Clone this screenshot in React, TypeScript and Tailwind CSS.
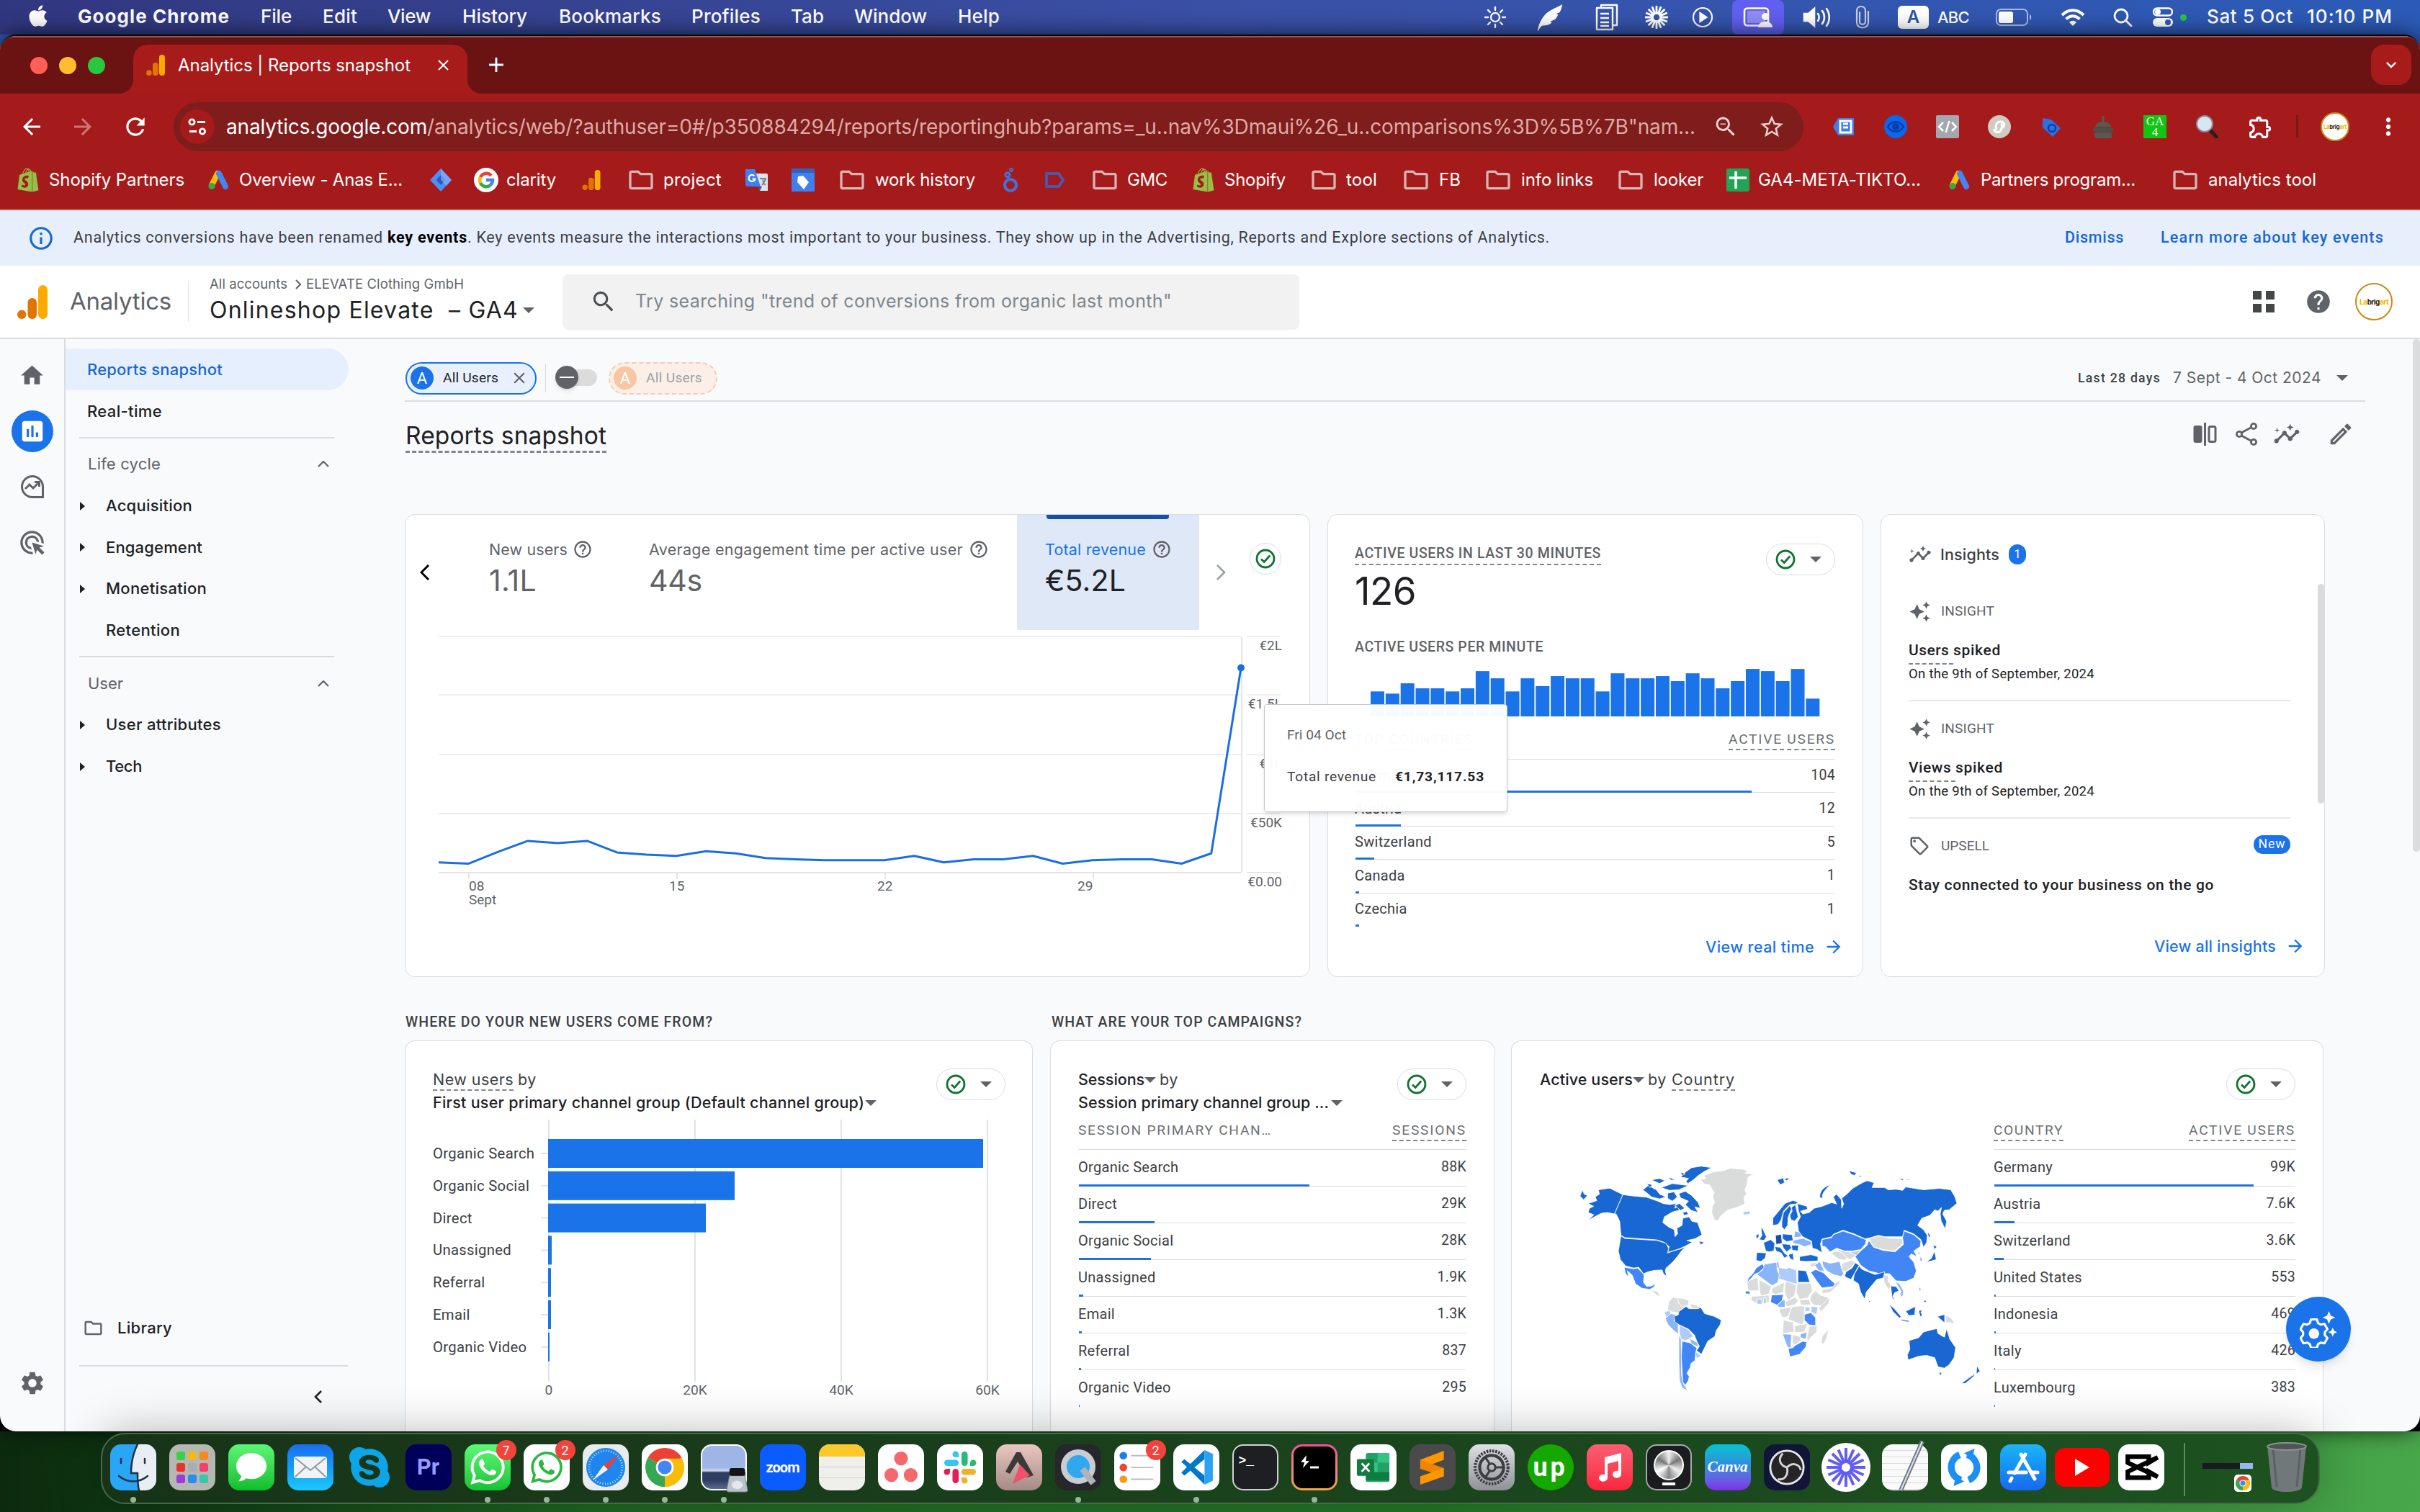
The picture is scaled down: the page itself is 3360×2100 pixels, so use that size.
import { useLayoutEffect, useRef, useState, type ReactNode } from "react";
import {
  MdHome, MdInsertChart, MdAdsClick, MdSettings, MdSearch, MdHelpOutline, MdHelp, MdArrowForward, MdArrowBack,
  MdRefresh, MdStarBorder, MdZoomOut, MdOutlineExtension, MdMoreVert, MdInfoOutline, MdClose, MdAdd,
  MdInsights, MdOutlineEdit, MdAutoAwesome, MdOutlineSell, MdExpandMore, MdOutlineFolder,
} from "react-icons/md";
import { FaApple, FaShopify, FaWhatsapp, FaSkype, FaYoutube, FaFeatherAlt } from "react-icons/fa";

/* Label whose tracking is adjusted so the text fills the width set by its class. */
function Fit({ className, children }: { className: string; children: string }) {
  const box = useRef<HTMLSpanElement>(null);
  const text = useRef<HTMLSpanElement>(null);
  const [spacing, setSpacing] = useState(0);
  useLayoutEffect(() => {
    if (box.current && text.current) {
      const room = box.current.clientWidth;
      const natural = text.current.getBoundingClientRect().width;
      setSpacing((room - natural) / children.length);
    }
  }, [children]);
  return (
    <span ref={box} className={`inline-block shrink-0 whitespace-pre ${className}`}>
      <span ref={text} style={{ letterSpacing: `${spacing}px` }}>{children}</span>
    </span>
  );
}

/* Geometric face used for product headings and navigation. */
const display = "font-['Inter',sans-serif]";

const Tri = ({ className = "" }: { className?: string }) => (
  <svg viewBox="0 0 16 8" className={`h-[8px] w-[16px] shrink-0 fill-[#5f6368] ${className}`}><path d="M0 0h16L8 8z" /></svg>
);

const GaLogo = ({ className }: { className: string }) => (
  <svg viewBox="0 0 42 47" className={`shrink-0 ${className}`}>
    <rect x="29" y="0" width="13" height="47" rx="6.5" fill="#f9ab00" />
    <rect x="14.5" y="18" width="12.5" height="29" rx="6" fill="#e37400" />
    <circle cx="6.2" cy="40.8" r="6.2" fill="#e37400" />
  </svg>
);

const AdsLogo = ({ className }: { className: string }) => (
  <svg viewBox="0 0 30 28" className={`h-[28px] w-[30px] shrink-0 ${className}`}>
    <path d="M13 5 5 21" stroke="#fbbc04" strokeWidth="8" strokeLinecap="round" />
    <path d="M15 5l9 18" stroke="#4285f4" strokeWidth="8" strokeLinecap="round" />
    <circle cx="5" cy="22.5" r="4.6" fill="#34a853" />
  </svg>
);

/* ---------- macOS menu bar ---------- */

function MenuBar() {
  return (
    <div className="flex h-12 shrink-0 items-center bg-linear-to-r from-[#31377f] via-[#3a50a5] to-[#2b5bb8] pb-[4px] font-['Inter',sans-serif] text-[26px] font-medium text-white">
      <FaApple className="ml-[36px] h-[34px] w-[34px]" />
      <Fit className="ml-[38px] w-[211px] font-bold">Google Chrome</Fit>
      <Fit className="ml-[43px] w-[43px]">File</Fit>
      <Fit className="ml-[43px] w-[48px]">Edit</Fit>
      <Fit className="ml-[42px] w-[60px]">View</Fit>
      <Fit className="ml-[44px] w-[90px]">History</Fit>
      <Fit className="ml-[44px] w-[142px]">Bookmarks</Fit>
      <Fit className="ml-[42px] w-[96px]">Profiles</Fit>
      <Fit className="ml-[42px] w-[46px]">Tab</Fit>
      <Fit className="ml-[42px] w-[101px]">Window</Fit>
      <Fit className="ml-[43px] w-[58px]">Help</Fit>
      <div className="ml-[672px] flex h-12 items-center pt-[4px]">
        <svg viewBox="0 0 32 32" className="h-[32px] w-[32px] stroke-white" fill="none" strokeWidth="2.4" strokeLinecap="round">
          <circle cx="16" cy="16" r="6" />
          <path d="M16 2v4M16 26v4M2 16h4M26 16h4M6 6l3 3M23 23l3 3M26 6l-3 3M6 26l3-3" />
        </svg>
        <svg viewBox="0 0 40 40" className="ml-[40px] h-[38px] w-[40px] fill-white"><path d="M2 39c2-12 8-20 13-25C22 8 30 6 38 1c-1 6-2 9-4 12l-5 2 3 1c-2 4-3 6-6 8l-6 2 3 1c-3 4-8 5-14 5-3 2-5 5-6 8z" /></svg>
        <svg viewBox="0 0 32 38" className="ml-[43px] h-[38px] w-[32px] stroke-white" fill="none" strokeWidth="2.4" strokeLinejoin="round">
          <path d="M8 6V2h22v28h-5M2 6h22v30H2zM7 14h12M7 20h12M7 26h12M7 31h12" />
        </svg>
        <svg viewBox="0 0 36 36" className="ml-[36px] h-[34px] w-[34px] stroke-white" fill="none" strokeWidth="3">
          <circle cx="18" cy="18" r="6" />
          <path d="M18 1v12M18 23v12M1 18h12M23 18h12M6 6l8 8M22 22l8 8M30 6l-8 8M6 30l8-8M11.500 2.300l4 10M20.500 23.700l4 10M24.500 2.300l-4 10M15.500 23.700l-4 10M2.300 11.500l10 4M33.700 24.500l-10-4M33.700 11.500l-10 4M2.300 24.500l10-4" />
        </svg>
        <svg viewBox="0 0 30 30" className="ml-[32px] h-[30px] w-[30px] fill-none stroke-white" strokeWidth="2.2">
          <circle cx="15" cy="15" r="13" /><path d="M11.500 9v12l9-6z" className="fill-white" />
        </svg>
        <div className="ml-[26px] flex h-12 w-[72px] items-center justify-center rounded-lg bg-[#615ff0]">
          <svg viewBox="0 0 42 28" className="h-[28px] w-[42px]">
            <rect x="2" y="1.500" width="33" height="24" rx="4" fill="none" stroke="#fff" strokeWidth="2.600" />
            <rect x="6" y="5" width="25" height="17" fill="#8f8df6" />
            <circle cx="31" cy="13" r="5" fill="#fff" /><path d="M21 28c0-11 20-11 20 0z" fill="#fff" />
          </svg>
        </div>
        <svg viewBox="0 0 40 32" className="ml-[26px] h-[32px] w-[40px] fill-none stroke-white" strokeWidth="2.600" strokeLinecap="round">
          <path d="M2 11h6l8-7v24l-8-7H2z" className="fill-white" /><path d="M21 11c2 3 2 7 0 10M27 7c4 5 4 13 0 18M33 4c5 7 5 17 0 24" />
        </svg>
        <svg viewBox="0 0 20 34" className="ml-[33px] h-[34px] w-[20px] fill-none stroke-[#c9d2ee]" strokeWidth="2.200" strokeLinecap="round">
          <path d="M18 9v15c0 10-16 10-16 0V8c0-8 12-8 12 0v15c0 5-8 5-8 0V10" />
        </svg>
        <div className="ml-[39px] flex h-[32px] w-[43px] items-center justify-center rounded-[6px] bg-white text-[24px] font-semibold text-[#2f55b0]">A</div>
        <Fit className="ml-[12px] w-[44px] text-[22px]">ABC</Fit>
        <svg viewBox="0 0 51 24" className="ml-[37px] h-[24px] w-[51px]">
          <rect x="1" y="1" width="43" height="22" rx="6" fill="none" stroke="#a9bbe6" strokeWidth="2" />
          <rect x="4" y="4" width="20" height="16" rx="3" fill="#fff" /><path d="M47 8c3 1 3 7 0 8z" fill="#a9bbe6" />
        </svg>
        <svg viewBox="0 0 34 26" className="ml-[39px] h-[26px] w-[34px] fill-none stroke-white" strokeWidth="4.200">
          <path d="M2 10c9-9 21-9 30 0M7.500 15.500c6-5.500 13-5.500 19 0" /><path d="M12 20c3-3 7-3 10 0l-5 5z" className="fill-white stroke-none" />
        </svg>
        <svg viewBox="0 0 27 26" className="ml-[39px] h-[26px] w-[27px] fill-none stroke-white" strokeWidth="2.800" strokeLinecap="round">
          <circle cx="11" cy="11" r="9" /><path d="M18 18l7 7" />
        </svg>
        <svg viewBox="0 0 30 28" className="ml-[27px] h-[28px] w-[30px]">
          <rect x="2" y="1.500" width="26" height="10" rx="5" fill="none" stroke="#fff" strokeWidth="2.400" /><circle cx="8" cy="6.500" r="4" fill="#fff" />
          <rect x="1" y="15" width="28" height="12" rx="6" fill="#fff" /><circle cx="22" cy="21" r="4" fill="#2f5ab8" />
        </svg>
        <div className="ml-[9px] size-[9px] rounded-full bg-[#28c840]" />
      </div>
      <Fit className="ml-[28px] w-[120px]">Sat 5 Oct</Fit>
      <Fit className="ml-[19px] w-[119px]">10:10 PM</Fit>
    </div>
  );
}

/* ---------- Browser chrome ---------- */

function TabStrip() {
  return (
    <div className="flex h-[80px] shrink-0 items-end border-t-2 border-[#8e5a58] bg-[#6b1212] font-['Inter',sans-serif]">
      <div className="ml-[42px] flex h-[78px] items-center gap-[16px]">
        <div className="size-[24px] rounded-full bg-[#ff5f57]" />
        <div className="size-[24px] rounded-full bg-[#febc2e]" />
        <div className="size-[24px] rounded-full bg-[#28c840]" />
      </div>
      <svg viewBox="0 0 20 20" className="ml-[19px] h-[20px] w-[20px] fill-[#a81b1b]"><path d="M20 0v20H0C12 20 20 12 20 0z" /></svg>
      <div className="flex h-[68px] w-[464px] items-center rounded-t-[20px] bg-[#a81b1b] pb-[11px] text-[24px] text-white">
        <GaLogo className="ml-[17px] h-[29px] w-[28px]" />
        <Fit className="ml-[17px] w-[323px]">Analytics | Reports snapshot</Fit>
        <MdClose className="ml-[33px] size-[25px]" />
      </div>
      <svg viewBox="0 0 20 20" className="h-[20px] w-[20px] fill-[#a81b1b]"><path d="M0 0v20h20C8 20 0 12 0 0z" /></svg>
      <div className="flex h-[80px] items-center"><MdAdd className="ml-[3px] size-[34px] text-white" /></div>
      <div className="mb-[12px] ml-auto mr-[12px] flex h-[56px] w-[56px] items-center justify-center rounded-[18px] bg-[#a81b1b] text-white">
        <MdExpandMore className="size-[28px]" />
      </div>
    </div>
  );
}

const Avatar = ({ className }: { className: string }) => (
  <div className={`flex shrink-0 items-center justify-center rounded-full border-2 border-[#c98a17] bg-white font-bold leading-none tracking-tighter text-[#f2b705] ${className}`}>
    La<span className="text-[#3b2b10]">brig</span>art
  </div>
);

function Toolbar() {
  return (
    <div className="flex h-[92px] shrink-0 items-center bg-[#a51b1b] font-['Inter',sans-serif] text-white">
      <MdArrowBack className="ml-[26px] size-[36px]" />
      <MdArrowForward className="ml-[35px] size-[36px] text-[#cf7676]" />
      <MdRefresh className="ml-[36px] size-[38px]" />
      <div className="ml-[34px] flex h-[68px] w-[2263px] items-center rounded-full bg-[#7f1c1c]">
        <div className="ml-[9px] flex size-[48px] items-center justify-center rounded-full bg-[#a51b1b]">
          <svg viewBox="0 0 26 24" className="h-[24px] w-[26px] fill-none stroke-white" strokeWidth="2.800">
            <circle cx="5.500" cy="5.500" r="3.600" /><path d="M13 5.500h11M2 18.500h10" /><circle cx="20" cy="18.500" r="3.600" />
          </svg>
        </div>
        <Fit className="ml-[16px] w-[279px] text-[28px]">analytics.google.com</Fit>
        <Fit className="w-[1761px] text-[28px] text-[#dfaaa5]">{"/analytics/web/?authuser=0#/p350884294/reports/reportinghub?params=_u..nav%3Dmaui%26_u..comparisons%3D%5B%7B\"nam..."}</Fit>
        <MdZoomOut className="ml-[24px] size-[36px] text-[#ecd0cd]" />
        <MdStarBorder className="ml-[27px] size-[38px] text-[#ecd0cd]" />
      </div>
      <div className="ml-[40px] flex items-center gap-[40px]">
        <svg viewBox="0 0 32 32" className="size-[32px]"><path d="M8 4h22v24H8L1 16z" fill="#3f7de8" /><rect x="11" y="8" width="15" height="16" fill="none" stroke="#fff" strokeWidth="3" /><path d="M15 12h7M15 17h7" stroke="#fff" strokeWidth="3" /></svg>
        <svg viewBox="0 0 32 32" className="size-[32px]"><circle cx="16" cy="16" r="16" fill="#0b66f0" /><path d="M5 16c6-9 16-9 22 0-6 9-16 9-22 0z" fill="none" stroke="#0a3ea8" strokeWidth="2.500" /><circle cx="16" cy="16" r="5" fill="#0a3ea8" /></svg>
        <svg viewBox="0 0 32 32" className="size-[32px]"><rect width="32" height="32" rx="2" fill="#a3a7ae" /><path d="M10 10l-6 6 6 6M22 10l6 6-6 6M18.500 8l-5 16" fill="none" stroke="#fff" strokeWidth="2.500" /></svg>
        <svg viewBox="0 0 32 32" className="size-[32px]"><circle cx="16" cy="16" r="16" fill="#cfcbc2" /><path d="M13 20c-3-1-3-10 4-11s8 8 1 9M18 12c3 1 1 9-2 11s-8 0-7-4" fill="none" stroke="#fff" strokeWidth="3" /></svg>
        <svg viewBox="0 0 32 32" className="size-[32px]"><path d="M4 4l12 2 13 12-11 12L4 17z" fill="#2f6fe0" /><circle cx="17" cy="18" r="5" fill="none" stroke="#0d3fa5" strokeWidth="2.500" /></svg>
        <svg viewBox="0 0 32 32" className="size-[32px]"><path d="M16 1v10" stroke="#555a52" strokeWidth="3" /><path d="M5 16c0-9 22-9 22 0z" fill="#555a52" /><rect x="2" y="17" width="28" height="6" rx="2" fill="#4b5049" /><rect x="4" y="24" width="24" height="8" rx="2" fill="#555a52" /></svg>
        <div className="flex size-[32px] flex-col items-center justify-center bg-[#12c512] font-['Liberation_Serif',serif] text-[17px] leading-[15px]"><span>GA</span><span>4</span></div>
        <svg viewBox="0 0 32 32" className="size-[32px]"><path d="M19 19l11 12" stroke="#222" strokeWidth="5" strokeLinecap="round" /><circle cx="13" cy="12" r="11" fill="#d7e6f3" stroke="#8a8f96" strokeWidth="2" /></svg>
        <MdOutlineExtension className="size-[37px]" />
      </div>
      <div className="ml-[31px] h-[32px] w-[3px] bg-[#7d1818]" />
      <Avatar className="ml-[31px] size-[40px] text-[8px]" />
      <MdMoreVert className="ml-[35px] size-[38px]" />
    </div>
  );
}

const Folder = ({ className }: { className: string }) => <MdOutlineFolder className={`size-[40px] shrink-0 text-[#d8b4b2] ${className}`} />;

function Bookmarks() {
  return (
    <div className="flex h-[70px] shrink-0 items-center border-b-2 border-[#c04d4d] bg-[#a51b1b] pb-[12px] font-['Inter',sans-serif] text-[24px] text-white">
      <FaShopify className="ml-[22px] size-[34px] shrink-0 text-[#95bf47]" />
      <Fit className="ml-[12px] w-[188px]">Shopify Partners</Fit>
      <AdsLogo className="ml-[33px]" />
      <Fit className="ml-[13px] w-[227px]">Overview - Anas E...</Fit>
      <svg viewBox="0 0 32 32" className="ml-[37px] size-[32px] shrink-0"><path d="M16 0l15 16-15 16L1 16z" fill="#4f8df7" /><path d="M16 9l6 7-6 7-6-7z" fill="#2859b8" /><path d="M16 0l15 16-7 8-8-8z" fill="#8fb6fb" opacity=".6" /></svg>
      <div className="ml-[30px] flex size-[34px] shrink-0 items-center justify-center rounded-full bg-white">
        <svg viewBox="0 0 24 24" className="size-[24px] fill-none" strokeWidth="4.500">
          <path d="M19 6A9 9 0 0 0 4 8" stroke="#ea4335" /><path d="M4 8a9 9 0 0 0 0 8" stroke="#fbbc04" />
          <path d="M4 16a9 9 0 0 0 14 3" stroke="#34a853" /><path d="M18 19a9 9 0 0 0 3-7h-9" stroke="#4285f4" />
        </svg>
      </div>
      <Fit className="ml-[11px] w-[69px]">clarity</Fit>
      <GaLogo className="ml-[35px] h-[28px] w-[28px]" />
      <Folder className="ml-[35px]" />
      <Fit className="ml-[11px] w-[81px]">project</Fit>
      <svg viewBox="0 0 32 32" className="ml-[33px] size-[32px] shrink-0"><path d="M14 7h15a2 2 0 0 1 2 2v22H20z" fill="#dfe3e8" /><path d="M0 1h13l8 24H2l-2-2z" fill="#3f80ee" /><path d="M20 31l-3-6h6z" fill="#2859b8" /><path d="M12.500 10.500a4.500 4.500 0 1 0 1 4h-4" fill="none" stroke="#fff" strokeWidth="2.200" /><path d="M20 14h9M24 14c0 5 2 8 4 9M28 14c-1 5-3 7-5 9" stroke="#7a828d" strokeWidth="1.800" fill="none" /></svg>
      <svg viewBox="0 0 32 32" className="ml-[32px] size-[32px] shrink-0"><rect width="32" height="32" fill="#3f80ee" /><rect width="32" height="6" fill="#2f63c0" /><path d="M9 11l7-1 8 9-7 10-9-10z" fill="#fff" /></svg>
      <Folder className="ml-[32px]" />
      <Fit className="ml-[12px] w-[139px]">work history</Fit>
      <svg viewBox="0 0 26 34" className="ml-[36px] h-[34px] w-[26px] shrink-0 fill-none stroke-[#3f74e0]"><circle cx="13" cy="24" r="8" strokeWidth="4" /><circle cx="9" cy="10" r="3" strokeWidth="3" /><circle cx="14" cy="3" r="2" strokeWidth="2" /></svg>
      <svg viewBox="0 0 28 22" className="ml-[35px] h-[22px] w-[28px] shrink-0 fill-none stroke-[#3f5fc0]" strokeWidth="3.500"><path d="M2 2h17l6 9-6 9H2z" /></svg>
      <Folder className="ml-[35px]" />
      <Fit className="ml-[11px] w-[56px]">GMC</Fit>
      <FaShopify className="ml-[33px] size-[34px] shrink-0 text-[#95bf47]" />
      <Fit className="ml-[12px] w-[85px]">Shopify</Fit>
      <Folder className="ml-[33px]" />
      <Fit className="ml-[11px] w-[43px]">tool</Fit>
      <Folder className="ml-[34px]" />
      <Fit className="ml-[12px] w-[30px]">FB</Fit>
      <Folder className="ml-[32px]" />
      <Fit className="ml-[12px] w-[100px]">info links</Fit>
      <Folder className="ml-[32px]" />
      <Fit className="ml-[12px] w-[69px]">looker</Fit>
      <svg viewBox="0 0 32 32" className="ml-[32px] size-[32px] shrink-0"><rect width="32" height="32" rx="3" fill="#23a455" /><path d="M13 4v24M4 13h24" stroke="#fff" strokeWidth="3.500" /></svg>
      <Fit className="ml-[12px] w-[226px]">GA4-META-TIKTO...</Fit>
      <AdsLogo className="ml-[39px]" />
      <Fit className="ml-[14px] w-[215px]">Partners program...</Fit>
      <Folder className="ml-[49px]" />
      <Fit className="ml-[12px] w-[150px]">analytics tool</Fit>
    </div>
  );
}

/* ---------- Analytics page ---------- */

function Banner() {
  return (
    <div className="flex h-[77px] shrink-0 items-center bg-[#e7effd] text-[21.500px] text-[#3c4043]">
      <MdInfoOutline className="ml-[38px] size-[38px] text-[#1967d2]" />
      <Fit className="ml-[26px] w-[436px]">Analytics conversions have been renamed </Fit>
      <Fit className="w-[111px] font-bold text-black">key events</Fit>
      <Fit className="w-[1503px]">. Key events measure the interactions most important to your business. They show up in the Advertising, Reports and Explore sections of Analytics.</Fit>
      <Fit className="ml-[715px] w-[82px] font-medium text-[#1967d2]">Dismiss</Fit>
      <Fit className="ml-[51px] w-[310px] font-medium text-[#1967d2]">Learn more about key events</Fit>
    </div>
  );
}

function Header() {
  return (
    <div className="flex h-[102px] shrink-0 items-center border-b-2 border-[#dadce0] bg-white">
      <GaLogo className="ml-[24px] h-[47px] w-[42px]" />
      <Fit className={`${display} ml-[31px] w-[141px] text-[33px] text-[#5f6368]`}>Analytics</Fit>
      <div className="ml-[23px] h-[56px] w-px bg-[#e0e2e5]" />
      <div className={`${display} ml-[29px] w-[451px] pb-[4px]`}>
        <div className="flex h-[28px] items-center text-[18.500px] text-[#5f6368]">
          <Fit className="w-[108px]">All accounts</Fit>
          <svg viewBox="0 0 8 14" className="ml-[11px] h-[14px] w-[8px] fill-none stroke-[#5f6368]" strokeWidth="2"><path d="M1 1l6 6-6 6" /></svg>
          <Fit className="ml-[7px] w-[219px]">ELEVATE Clothing GmbH</Fit>
        </div>
        <div className="flex h-[44px] items-center">
          <Fit className="w-[429px] text-[32px] text-[#202124]">{"Onlineshop Elevate  – GA4"}</Fit>
          <Tri className="ml-[6px]" />
        </div>
      </div>
      <div className="ml-[39px] flex h-[77px] w-[1023px] items-center rounded-[8px] bg-[#f2f2f2]">
        <MdSearch className="ml-[38px] size-[38px] text-[#4b4f54]" />
        <Fit className={`${display} ml-[25px] w-[745px] text-[25px] text-[#80868b]`}>{'Try searching "trend of conversions from organic last month"'}</Fit>
      </div>
      <div className="ml-auto mr-[38px] flex items-center">
        <svg viewBox="0 0 30 30" className="size-[30px] fill-[#444746]"><path d="M0 0h12v12H0zM18 0h12v12H18zM0 18h12v12H0zM18 18h12v12H18z" /></svg>
        <MdHelp className="ml-[42px] size-[38px] text-[#5f6368]" />
        <Avatar className="ml-[32px] size-[52px] text-[11px]" />
      </div>
    </div>
  );
}

function Rail() {
  const cell = "flex h-[77.300px] items-center justify-center text-[#5f6368]";
  return (
    <div className="flex w-[91px] shrink-0 flex-col border-r-2 border-[#dadce0] pt-[12px]">
      <div className={cell}><MdHome className="size-[37px]" /></div>
      <div className={cell}><div className="flex size-[58px] items-center justify-center rounded-full bg-[#1a73e8]"><MdInsertChart className="size-[38px] text-white" /></div></div>
      <div className={cell}>
        <svg viewBox="0 0 32 32" className="size-[32px] fill-none stroke-[#5f6368]" strokeWidth="3"><path d="M30.500 30.500V16A14.500 14.500 0 1 0 16 30.500z" /><path d="M6 19l6-6 5 5 8-8M19 9.500h6.500V16" /></svg>
      </div>
      <div className={cell}><MdAdsClick className="size-[39px]" /></div>
      <div className={`${cell} mb-[28px] mt-auto`}><MdSettings className="size-[38px]" /></div>
    </div>
  );
}

function NavGroup({ title, titleWidth }: { title: string; titleWidth: string }) {
  return (
    <div className="flex h-[57.700px] items-center pl-[31px] text-[#5f6368]">
      <Fit className={titleWidth}>{title}</Fit>
      <svg viewBox="0 0 16 9" className="ml-auto mr-[105px] h-[9px] w-[16px] fill-none stroke-[#5f6368]" strokeWidth="2.200"><path d="M1 8l7-7 7 7" /></svg>
    </div>
  );
}

function NavItem({ label, width, arrow = true }: { label: string; width: string; arrow?: boolean }) {
  return (
    <div className="flex h-[57.700px] items-center pl-[20px] font-medium">
      <svg viewBox="0 0 7 12" className={`h-[12px] w-[7px] ${arrow ? "fill-[#202124]" : "fill-transparent"}`}><path d="M0 0l7 6-7 6z" /></svg>
      <Fit className={`ml-[29px] ${width}`}>{label}</Fit>
    </div>
  );
}

function Nav() {
  return (
    <div className={`${display} flex w-[471px] shrink-0 flex-col pt-[13px] text-[22px] text-[#202124]`}>
      <div className="flex h-[58px] w-[393px] items-center rounded-r-full bg-[#e6effd] pl-[30px] font-medium text-[#1967d2]"><Fit className="w-[188px]">Reports snapshot</Fit></div>
      <div className="flex h-[58px] items-center pl-[30px] font-medium"><Fit className="w-[104px]">Real-time</Fit></div>
      <div className="mb-[7px] ml-[19px] mt-[7px] h-[2px] w-[354px] bg-[#dadce0]" />
      <NavGroup title="Life cycle" titleWidth="w-[101px]" />
      <NavItem label="Acquisition" width="w-[120px]" />
      <NavItem label="Engagement" width="w-[134px]" />
      <NavItem label="Monetisation" width="w-[140px]" />
      <NavItem label="Retention" width="w-[103px]" arrow={false} />
      <div className="mb-[7px] ml-[19px] mt-[7px] h-[2px] w-[354px] bg-[#dadce0]" />
      <NavGroup title="User" titleWidth="w-[49px]" />
      <NavItem label="User attributes" width="w-[160px]" />
      <NavItem label="Tech" width="w-[50px]" />
      <div className="mb-[23px] mt-auto flex h-[58px] items-center pl-[24px] font-medium">
        <MdOutlineFolder className="size-[29px] text-[#5f6368]" /><Fit className="ml-[19px] w-[76px]">Library</Fit>
      </div>
      <div className="ml-[19px] h-[2px] w-[373px] bg-[#dadce0]" />
      <div className="mb-[7px] flex h-[83px] items-center pl-[345px]">
        <svg viewBox="0 0 11 18" className="h-[18px] w-[11px] fill-none stroke-[#202124]" strokeWidth="2.600"><path d="M10 1L2 9l8 8" /></svg>
      </div>
    </div>
  );
}

const Check = () => (
  <svg viewBox="0 0 28 28" className="size-[28px] shrink-0 fill-none stroke-[#137333]" strokeWidth="2.800"><circle cx="14" cy="14" r="12" /><path d="M8 14.500l4.200 4 8-9" /></svg>
);

const StatusPill = () => (
  <div className="flex h-[44px] w-[96px] shrink-0 items-center rounded-full border border-[#dadce0] pl-[12px]">
    <Check /><Tri className="ml-[20px] h-[7px] w-[13px]" />
  </div>
);

function FilterBar() {
  return (
    <div className="flex h-[87px] w-[2722px] shrink-0 items-center border-b-2 border-[#dadce0] pl-px pt-[23px]">
      <div className="flex h-[45px] w-[182px] items-center rounded-full border-2 border-[#1a73e8] bg-[#e8f0fe] text-[19.200px] text-[#202124]">
        <div className="ml-[5px] flex size-[32px] items-center justify-center rounded-full bg-[#1a73e8] text-[22px] text-white">A</div>
        <Fit className="ml-[13px] w-[77px]">All Users</Fit>
        <MdClose className="ml-[16px] size-[26px] text-[#5f6368]" />
      </div>
      <div className="ml-[12px] h-[40px] w-px bg-[#dadce0]" />
      <div className="ml-[13px] flex h-[32px] w-[58px] items-center rounded-full pb-[2px]">
        <div className="z-10 flex size-[32px] shrink-0 items-center justify-center rounded-full bg-[#5f6368] shadow-md"><div className="h-[2px] w-[20px] bg-white" /></div>
        <div className="-ml-[20px] h-[23px] w-[46px] rounded-full bg-[#dcdcdc]" />
      </div>
      <div className="ml-[16px] flex h-[45px] w-[151px] items-center rounded-full border-2 border-dashed border-[#f7cdb0] bg-[#fcefe8] text-[19.200px] text-[#9aa0a6]">
        <div className="ml-[5px] flex size-[32px] items-center justify-center rounded-full bg-[#f8c6a3] text-[22px] text-white">A</div>
        <Fit className="ml-[13px] w-[78px]">All Users</Fit>
      </div>
      <Fit className="ml-auto w-[115px] text-[17.600px] font-medium text-[#3c4043]">Last 28 days</Fit>
      <Fit className={`${display} ml-[17px] w-[206px] text-[21px] text-[#5f6368]`}>7 Sept - 4 Oct 2024</Fit>
      <Tri className="ml-[21px] mr-[24px] h-[6px] w-[12px]" />
    </div>
  );
}

function TitleBar() {
  return (
    <div className="mb-[59px] flex h-[97px] w-[2722px] shrink-0 items-center pl-px text-[#5f6368]">
      <div className="border-b-[3px] border-dashed border-[#80868b]"><Fit className={`${display} w-[279px] text-[33.500px] leading-[42px] text-[#202124]`}>Reports snapshot</Fit></div>
      <div className="ml-auto mr-[15px] flex items-center pb-[8px]">
        <svg viewBox="0 0 32 32" className="h-[32px] w-[33px]"><rect x="0" y="4" width="12" height="24" rx="3" fill="#5f6368" /><rect x="14.500" y="0" width="3" height="32" fill="#5f6368" /><rect x="21.500" y="5.500" width="9" height="21" rx="2" fill="none" stroke="#5f6368" strokeWidth="3" /></svg>
        <svg viewBox="0 0 30 32" className="ml-[26px] h-[32px] w-[30px] fill-none stroke-[#5f6368]" strokeWidth="2.800"><circle cx="25" cy="5" r="3.600" /><circle cx="5" cy="16" r="3.600" /><circle cx="25" cy="27" r="3.600" /><path d="M8 14l14-7.500M8 18l14 7.500" /></svg>
        <MdInsights className="ml-[22px] size-[38px]" />
        <MdOutlineEdit className="ml-[37px] size-[38px]" />
      </div>
    </div>
  );
}

const card = "shrink-0 border-[#dadce0] bg-white";

const revenue = [1171, 1175, 1137, 1102, 1109, 1102, 1139, 1146, 1150, 1135, 1142, 1157, 1161, 1164, 1164, 1164, 1150, 1171, 1161, 1161, 1150, 1175, 1164, 1161, 1161, 1175, 1142, 548];
const revenueLine = revenue.map((v, i) => `${609 + i * 41.26},${690 + v / 2.306}`).join(" ");

function RevenueCard() {
  return (
    <div className={`${card} relative flex w-[1257px] flex-col rounded-[14px] border`}>
      <div className={`${display} flex h-[160px] text-[21.500px] text-[#5f6368]`}>
        <div className="flex w-[116px] items-center pl-[20px]"><svg viewBox="0 0 14 22" className="h-[22px] w-[14px] fill-none stroke-black" strokeWidth="3"><path d="M12 1L2 11l10 10" /></svg></div>
        <div className="w-[222px] pt-[31px]">
          <div className="flex h-[34px] items-center"><Fit className="w-[109px]">New users</Fit><MdHelpOutline className="ml-[7px] size-[28px]" /></div>
          <div className="flex h-[54px] items-center text-[41px]"><Fit className="w-[66px]">1.1L</Fit></div>
        </div>
        <div className="w-[511px] pt-[31px]">
          <div className="flex h-[34px] items-center"><Fit className="w-[436px]">Average engagement time per active user</Fit><MdHelpOutline className="ml-[8px] size-[28px]" /></div>
          <div className="flex h-[54px] items-center text-[41px]"><Fit className="w-[74px]">44s</Fit></div>
        </div>
        <div className="w-[253px] rounded-b-[3px] bg-[#dfe8f7] pl-[39px]">
          <div className="ml-[2px] h-[6px] w-[170px] rounded-b-[4px] bg-[#174ea6]" />
          <div className="mt-[25px] flex h-[34px] items-center"><Fit className="w-[140px] text-[#1a73e8]">Total revenue</Fit><MdHelpOutline className="ml-[8px] size-[28px]" /></div>
          <div className="flex h-[54px] items-center text-[41px] text-[#202124]"><Fit className="w-[112px]">€5.2L</Fit></div>
        </div>
        <div className="flex items-center pl-[23px]"><svg viewBox="0 0 14 22" className="h-[22px] w-[14px] fill-none stroke-[#9aa0a6]" strokeWidth="2.600"><path d="M2 1l10 10L2 21" /></svg></div>
        <div className="ml-[33px] mt-[39px] flex size-[44px] items-center justify-center rounded-full border border-[#dadce0]"><Check /></div>
      </div>
      <svg viewBox="563 875 1255 480" className="h-[480px] w-[1255px]" fontSize="19" fill="#5f6368">
        <g stroke="#eceef0" strokeWidth="2">
          {[884, 965, 1048, 1130].map((y) => <path key={y} d={`M609 ${y}H1723M1731 ${y}h47`} />)}
          <path d="M609 1212H1723M1731 1212h47M651 1212v9M940 1212v9M1229 1212v9M1518 1212v9M1724 884v328" stroke="#e3e5e7" />
        </g>
        <polyline points={revenueLine} fill="none" stroke="#1a6fe0" strokeWidth="3" strokeLinejoin="round" />
        <circle cx="1723" cy="927.500" r="5" fill="#1a6fe0" />
        <g textAnchor="end">
          <text x="1780" y="903">€2L</text><text x="1780" y="984">€1.5L</text><text x="1780" y="1067">€1L</text>
          <text x="1780" y="1149">€50K</text><text x="1780" y="1231">€0.00</text>
        </g>
        <text x="651" y="1237">08</text><text x="651" y="1256">Sept</text>
        <text x="929" y="1237">15</text><text x="1218" y="1237">22</text><text x="1496" y="1237">29</text>
      </svg>
      <div className="absolute left-[1192px] top-[263px] z-20 flex h-[150px] w-[338px] flex-col rounded-[4px] border border-[#c4c7ca] bg-white/97 pl-[31px] text-[19.200px] shadow-md">
        <div className="mt-[25px] flex h-[34px] items-center text-[#5f6368]"><Fit className="w-[82px]">Fri 04 Oct</Fit></div>
        <div className="mt-[24px] flex h-[34px] items-center text-[#3c4043]"><Fit className="w-[124px]">Total revenue</Fit><Fit className="ml-[26px] w-[124px] font-bold text-[#202124]">€1,73,117.53</Fit></div>
      </div>
    </div>
  );
}

type Row = { label: string; value: string; bar: number };

function TableRows({ rows, rowClass }: { rows: Row[]; rowClass: string }) {
  return (
    <>
      {rows.map((r, i) => (
        <div key={r.label} className={`flex flex-col ${rowClass}`}>
          <div className="flex flex-1 items-center justify-between text-[#3c4043]">
            <span className="text-[20px] font-[450] tracking-[0.300px]">{r.label}</span>
            <span className="text-[19.500px] tracking-[0.300px]">{r.value}</span>
          </div>
          <div className="flex h-[3px] items-end pl-[1px]">
            <div className="h-[3px] bg-[#1f74dc]" style={{ width: r.bar }} />
            {i < rows.length - 1 && <div className="h-px flex-1 bg-[#dadce0]" />}
          </div>
        </div>
      ))}
    </>
  );
}

function ColumnHead({ children, width, dashed = true }: { children: string; width: string; dashed?: boolean }) {
  return (
    <div className={`h-[28px] border-b-2 border-dashed leading-[26px] ${dashed ? "border-[#80868b]" : "border-transparent"}`}>
      <Fit className={`${width} text-[19.200px] font-[450] text-[#6c7075]`}>{children}</Fit>
    </div>
  );
}

const minuteTops = [623, 630, 597, 613, 613, 623, 613, 558, 581, 623, 581, 606, 574, 581, 581, 623, 565, 581, 581, 574, 590, 565, 581, 613, 590, 551, 558, 590, 551, 646];

function RealtimeCard() {
  return (
    <div className={`${card} flex w-[744px] flex-col rounded-[14px] border pl-[37px] pr-[38px]`}>
      <div className="mt-[40px] flex justify-between">
        <div className="h-[30px] border-b-2 border-dashed border-[#80868b] leading-[28px]"><Fit className="w-[342px] text-[19.500px] font-medium text-[#5f6368]">ACTIVE USERS IN LAST 30 MINUTES</Fit></div>
        <div className="h-[30px]"><StatusPill /></div>
      </div>
      <div className={`${display} flex h-[74px] items-center text-[53px] text-[#202124]`}><Fit className="w-[85px]">126</Fit></div>
      <div className="flex h-[66px] items-center pt-[14px]"><Fit className="w-[262px] text-[19.500px] font-medium text-[#5f6368]">ACTIVE USERS PER MINUTE</Fit></div>
      <svg viewBox="1881 925 667 70" className="h-[70px] w-[667px] fill-[#1a73e8]">
        {minuteTops.map((t, i) => <rect key={i} x={1903 + i * 20.84} y={995 - (703 - t) / 2.306} width="19" height={(703 - t) / 2.306} />)}
      </svg>
      <div className="flex h-[60px] items-start justify-between border-b border-[#dadce0] pt-[19px]">
        <ColumnHead width="w-[165px]">TOP COUNTRIES</ColumnHead>
        <ColumnHead width="w-[148px]">ACTIVE USERS</ColumnHead>
      </div>
      <TableRows rowClass="h-[46.400px]" rows={[
        { label: "Germany", value: "104", bar: 550 }, { label: "Austria", value: "12", bar: 63 }, { label: "Switzerland", value: "5", bar: 26 },
        { label: "Canada", value: "1", bar: 5 }, { label: "Czechia", value: "1", bar: 5 },
      ]} />
      <div className={`${display} -mr-[12px] flex h-[56px] items-center justify-end text-[21.500px] font-medium text-[#1a73e8]`}><Fit className="w-[151px]">View real time</Fit><MdArrowForward className="ml-[13px] size-[28px]" /></div>
    </div>
  );
}

function Insight({ word, width }: { word: string; width: string }) {
  return (
    <>
      <div className="flex h-[46px] items-center text-[19px] font-[450] text-[#5f6368]"><MdAutoAwesome className="size-[31px]" /><Fit className="ml-[14px] w-[74px]">INSIGHT</Fit></div>
      <div className="mt-[14px] flex h-[37px] text-[21px] font-medium leading-[35px] text-[#202124]">
        <div className="border-b-2 border-dashed border-[#80868b]"><Fit className={width}>{word}</Fit></div><Fit className="w-[66px]">spiked</Fit>
      </div>
      <div className="flex h-[28px] items-center text-[18.500px] text-[#202124]"><Fit className="w-[258px]">On the 9th of September, 2024</Fit></div>
      <div className="mb-[15px] mt-[21px] h-[2px] w-[530px] bg-[#e4e6e9]" />
    </>
  );
}

function InsightsCard() {
  return (
    <div className={`${card} relative flex w-[617px] flex-col rounded-[14px] border pl-[38px]`}>
      <div className="flex h-[111px] items-center pb-px text-[#5f6368]">
        <MdInsights className="size-[32px]" />
        <Fit className={`${display} ml-[12px] w-[82px] text-[21.500px] font-medium text-[#3c4043]`}>Insights</Fit>
        <div className="ml-[13px] flex h-[28px] w-[24px] items-center justify-center rounded-full bg-[#1a73e8] text-[17px] text-white">1</div>
      </div>
      <Insight word="Users " width="w-[62px]" />
      <Insight word="Views " width="w-[65px]" />
      <div className="flex h-[46px] w-[530px] items-center text-[19px] font-[450] text-[#5f6368]">
        <MdOutlineSell className="size-[30px]" /><Fit className="ml-[15px] w-[67px]">UPSELL</Fit>
        <div className="mb-[4px] ml-auto flex h-[26px] w-[51px] items-center justify-center rounded-full bg-[#1a73e8] pb-px text-[17.600px] font-normal text-white"><Fit className="w-[38px]">New</Fit></div>
      </div>
      <div className="mt-[13px] flex h-[37px] items-center text-[21px] font-medium text-[#202124]"><Fit className="w-[424px]">Stay connected to your business on the go</Fit></div>
      <div className={`${display} mr-[26px] mt-[38px] flex h-[56px] items-center justify-end text-[21.500px] font-medium text-[#1a73e8]`}><Fit className="w-[169px]">View all insights</Fit><MdArrowForward className="ml-[13px] size-[28px]" /></div>
      <div className="absolute right-0 top-[96px] h-[305px] w-[9px] rounded-full bg-[#dadcdc]" />
    </div>
  );
}

const channels = [
  { label: "Organic Search", width: 604 }, { label: "Organic Social", width: 259 }, { label: "Direct", width: 219 }, { label: "Unassigned", width: 5 },
  { label: "Referral", width: 4 }, { label: "Email", width: 4 }, { label: "Organic Video", width: 2 },
];

function NewUsersCard() {
  return (
    <div className={`${card} flex w-[872px] flex-col rounded-t-[14px] border border-b-0 pl-[38px] pr-[37px]`}>
      <div className="flex h-[109px] justify-between pt-[38px] text-[#3c4043]">
        <div className={`${display} text-[21.500px]`}>
          <div className="flex h-[32px] leading-[30px]"><div className="h-[31px] border-b-2 border-dashed border-[#80868b]"><Fit className="w-[112px]">New users</Fit></div><Fit className="ml-[6px] w-[26px]">by</Fit></div>
          <div className="flex h-[32px] items-center pb-px font-[450] text-[#202124]"><Fit className="w-[599px]">First user primary channel group (Default channel group)</Fit><Tri className="ml-px" /></div>
        </div>
        <StatusPill />
      </div>
      <svg viewBox="601 1555 795 433" className="h-[433px] w-[795px]" fontSize="19.200">
        <path d="M762 1555v364M965 1555v364M1168 1555v364M1371 1555v364" stroke="#e0e2e4" strokeWidth="2" />
        {channels.map((c, i) => (
          <g key={c.label}>
            <path d={`M751 ${1602 + i * 44.8}h10`} stroke="#e0e2e4" strokeWidth="2" />
            <rect x="761" y={1582 + i * 44.8} width={c.width} height="40" fill="#1a73e8" />
            <text x="601" y={1609 + i * 44.8} fontSize="20.300" fontWeight="450" letterSpacing=".3" fill="#3c4043">{c.label}</text>
          </g>
        ))}
        <g fill="#5f6368" textAnchor="middle"><text x="762" y="1937">0</text><text x="965" y="1937">20K</text><text x="1168" y="1937">40K</text><text x="1371" y="1937">60K</text></g>
      </svg>
    </div>
  );
}

function CampaignsCard() {
  return (
    <div className={`${card} flex w-[617px] flex-col rounded-t-[14px] border border-b-0 px-[38px]`}>
      <div className="flex h-[102px] justify-between pt-[38px] text-[#202124]">
        <div className={`${display} text-[21.500px]`}>
          <div className="flex h-[32px] items-center pb-px"><Fit className="w-[92px] font-[450]">Sessions</Fit><Tri /><Fit className="ml-[5px] w-[26px] text-[#3c4043]">by</Fit></div>
          <div className="flex h-[32px] items-center pb-px font-[450]"><Fit className="w-[348px]">Session primary channel group ...</Fit><Tri className="ml-[3px]" /></div>
        </div>
        <StatusPill />
      </div>
      <div className="flex h-[49px] items-start justify-between border-b border-[#dadce0] pt-[9px]">
        <ColumnHead width="w-[269px]" dashed={false}>SESSION PRIMARY CHAN…</ColumnHead>
        <ColumnHead width="w-[103px]">SESSIONS</ColumnHead>
      </div>
      <TableRows rowClass="h-[51px]" rows={[
        { label: "Organic Search", value: "88K", bar: 320 }, { label: "Direct", value: "29K", bar: 105 }, { label: "Organic Social", value: "28K", bar: 100 },
        { label: "Unassigned", value: "1.9K", bar: 6 }, { label: "Email", value: "1.3K", bar: 4 }, { label: "Referral", value: "837", bar: 3 }, { label: "Organic Video", value: "295", bar: 1 },
      ]} />
    </div>
  );
}

/* World map, grouped by shade. */
const mapShades: { fill: string; paths: string[] }[] = [
  { fill: "#dadcdc", paths: [
    "M607 655L625 650 618 640 645 628 680 622 700 614 740 618 755 625 745 632 775 634 755 645 752 670 745 690 750 705 742 715 745 740 720 752 690 762 672 780 660 800 650 795 642 770 645 745 652 735 645 715 650 700 635 672 620 670z",
    "M455 1042L475 1048 481 1066 470 1060z",
    "M508 1085L520 1068 535 1070 540 1090 560 1100 545 1112 540 1122 520 1120 505 1112z", "M535 1070L555 1072 572 1080 568 1097 552 1100 540 1088z", "M574 1090L605 1100 605 1108 580 1106z",
    "M1130 862L1160 852 1195 860 1235 862 1235 880 1210 905 1175 900 1145 890z",
    "M1012 912L1030 905 1050 912 1065 925 1055 938 1035 932z", "M1030 898L1060 908 1085 908 1088 925 1070 935z", "M1048 948L1075 938 1088 943 1075 965 1055 978 1045 970z",
    "M950 948L968 945 962 958 948 962z", "M985 1042L1015 1035 1028 1015 1042 1008 1038 1022 1010 1050 985 1055z",
    "M1175 990L1190 990 1190 1010 1200 1025 1192 1042 1178 1015z", "M1370 1130L1388 1143 1398 1163 1380 1156 1370 1158z", "M1280 912L1292 905 1288 920z",
    "M908 1018L950 1018 955 1045 940 1070 915 1075 905 1050z", "M872 1010L905 1025 900 1060 880 1080 868 1050z", "M830 1035L868 1015 865 1050 840 1058 828 1050z", "M790 1006L828 1030 820 1055 795 1065 790 1040z",
    "M752 1012L785 998 788 1045 755 1045z", "M765 1065L820 1060 822 1085 790 1092 765 1080z", "M870 1085L900 1068 912 1080 900 1095 875 1100z",
    "M950 1060L965 1045 980 1060 1008 1070 990 1098 960 1095 948 1080z", "M1010 1066L1005 1090 980 1120 975 1105z", "M915 1077L945 1075 950 1095 920 1095z",
    "M893 1100L930 1098 930 1140 925 1165 900 1155 880 1145 885 1120z", "M850 1110L890 1102 880 1135 862 1140z", "M865 1148L895 1155 898 1190 862 1195z", "M900 1168L940 1160 930 1190 900 1192z",
    "M945 1170L970 1168 968 1190 945 1215 940 1235 938 1210z", "M893 1200L915 1205 920 1220 900 1235 892 1225z", "M1005 1180L1000 1210 990 1232 982 1228 985 1205z",
  ] },
  { fill: "#aecbfa", paths: [
    "M738 768L762 764 760 776 742 778z", "M495 1120L512 1113 515 1128 500 1138z", "M542 1165L570 1182 585 1205 570 1215 560 1220 547 1214 542 1195z", "M594 1260L608 1272 600 1282 590 1275z",
    "M1070 910L1105 903 1092 920z", "M850 963L875 968 880 962 905 972 907 1022 885 1015 850 1002z", "M782 1074h16v18h-14z", "M803 1070h8v20h-8z", "M952 1100L972 1102 968 1130 950 1118z", "M932 1102h15v14l-14 3z",
  ] },
  { fill: "#8ab4f8", paths: [
    "M498 1142L515 1125 532 1130 525 1150 538 1164 538 1198 520 1180 505 1162z", "M572 1212L598 1228 600 1242 580 1232z", "M540 1200L547 1216 548 1280 548 1340 554 1372 568 1396 550 1386 542 1360 540 1290z",
    "M985 940L1010 948 1040 942 1045 965 1052 985 1045 995 1020 988 1000 975 988 958z", "M962 955L978 942 992 975 975 975z", "M1212 1012L1225 1020 1238 1045 1236 1062 1228 1068 1230 1045z",
    "M900 835L918 840 922 855 898 858z", "M895 868L925 860 950 872 952 882 930 890 915 882 895 878z", "M805 952L845 944 845 970 852 990 848 1015 830 1027 782 987 800 972z",
    "M862 1078l8 0 0 25-20 0-4-8z", "M862 1197L890 1198 888 1245 878 1245z", "M918 1197L938 1190 935 1215 918 1210z", "M843 944h7l2 18-5 6z",
  ] },
  { fill: "#4285f4", paths: [
    "M370 962L400 968 412 965 432 988 430 1015 440 1030 455 1028 468 1020 462 1032 450 1040 425 1036 405 1020 395 990 380 975 384 998 374 984z",
    "M550 1222L575 1228 596 1246 592 1262 590 1290 578 1300 575 1315 565 1335 572 1345 570 1360 560 1377 552 1365 548 1280z",
    "M985 865L1015 858 1020 848 1050 835 1085 848 1122 866 1120 880 1105 900 1080 905 1055 905 1030 895 1010 908 995 890 985 888z",
    "M1088 925L1105 905 1125 885 1130 868 1145 892 1175 903 1212 908 1238 882 1235 858 1240 835 1270 848 1292 870 1290 890 1270 905 1280 925 1262 915 1255 925 1270 945 1278 975 1270 1000 1245 1012 1215 1010 1195 985 1165 985 1130 975 1105 955z",
    "M950 980L965 970 990 982 1005 1000 1025 1020 1020 1030 985 1035 968 1010z", "M1290 922L1297 940 1290 940z",
    "M780 965L800 950 805 962 790 980 775 987 765 1000 752 1016 756 1000 770 985z", "M746 1046h14l2 10-14 0z", "M828 1060L865 1058 860 1080 845 1095 825 1085z",
    "M930 1128L950 1122 965 1140 965 1167 945 1165 930 1148z", "M880 1248L895 1245 900 1238 925 1222 937 1225 935 1242 915 1268 885 1277z",
  ] },
  { fill: "#1967d2", paths: [
    "M290 690L325 684 366 707 340 775 318 770 300 772 278 785 258 798 276 778 258 770 262 755 275 748 258 738 285 728 280 715 293 705z", "M240 690L246 705 256 710 244 725 233 712z",
    "M366 707L400 712 440 716 475 730 490 738 512 742 530 738 528 755 545 742 540 762 520 768 495 785 490 805 510 822 526 830 528 855 536 845 534 825 550 815 552 790 572 785 580 800 598 805 612 848 590 862 565 868 582 874 560 888 540 898 520 905 505 910 510 890 495 875 472 866 372 858 360 850 356 800 345 775 340 775z",
    "M428 690L445 675 470 690 480 705 500 715 480 722 455 715 440 700z", "M455 655L480 650 497 658 480 668z", "M485 682L520 668 570 675 540 690 510 692z", "M505 702L525 697 535 715 520 730 505 720z",
    "M540 703L560 695 580 710 600 735 607 755 590 750 600 770 578 762 560 742 570 730 545 718z", "M528 745L542 738 558 755 545 762z", "M562 660L570 650 545 645 560 628 580 612 610 607 642 612 620 625 600 640 585 655 568 668z",
    "M508 645L530 655 515 656z", "M545 628L560 634 550 640z", "M440 668l18 4-8 10z", "M602 870l18 5-12 8z", "M552 770l12-4 6 10-14 4z",
    "M360 852L372 861 472 868 500 878 508 895 505 912 525 904 545 898 562 890 548 905 535 925 520 945 500 965 498 975 502 995 492 985 488 972 465 973 445 978 430 985 415 962 400 965 375 958 358 935 352 905z",
    "M540 1118L562 1100 572 1108 600 1108 608 1103 620 1125 650 1135 672 1148 668 1165 656 1185 652 1205 630 1222 620 1245 610 1268 595 1255 604 1240 598 1228 588 1200 570 1180 542 1165 528 1155 525 1135 538 1130z",
    "M908 738L938 748 940 758 918 765 925 775 945 770 960 755 985 748 1015 735 1030 740 1020 715 1030 705 1045 725 1046 755 1052 740 1046 720 1062 705 1080 685 1110 665 1125 658 1147 665 1140 682 1180 682 1190 690 1215 688 1235 692 1245 680 1300 690 1350 685 1385 690 1398 715 1404 738 1380 760 1365 762 1360 775 1372 800 1368 828 1355 800 1352 775 1356 752 1345 765 1335 760 1320 780 1295 790 1282 815 1300 830 1312 850 1310 875 1300 892 1292 865 1270 845 1240 832 1235 855 1180 855 1160 850 1130 860 1118 862 1085 845 1050 832 1020 846 1015 855 985 863 980 880 985 912 970 900 955 895 952 870 925 855 912 835 908 805 918 785 912 765z",
    "M978 718C976 695 990 680 1010 672 996 690 984 700 986 720z", "M1068 623L1092 630 1086 640 1075 635z", "M1096 638l14 4-6 3z", "M845 655L865 648 868 665 855 672z", "M866 650L885 648 875 658z", "M1222 650L1240 652 1235 657z", "M1248 652h10v3h-8z", "M1312 835L1322 852 1316 858z",
    "M915 925L950 918 972 925 972 940 935 942 915 940z", "M1055 992L1060 978 1078 965 1088 946 1100 955 1085 985 1075 1005 1060 998z",
    "M1085 987L1100 958 1110 970 1150 988 1180 978 1175 1000 1155 1005 1140 1025 1122 1050 1118 1075 1105 1050 1098 1020 1082 1008z", "M1129 1075l5 8-4 4z", "M1198 1028L1215 1030 1224 1045 1210 1052 1205 1065 1212 1082 1203 1070z",
    "M1193 1092L1210 1108 1230 1135 1226 1142 1205 1118z", "M1230 1145L1256 1150 1254 1155 1232 1150z", "M1245 1117L1275 1100 1273 1130 1255 1132z", "M1285 1115l12-3-5 9 5 10-7 5z", "M1335 1128L1345 1135 1366 1128 1366 1158 1350 1142z", "M1287 1030l5 10-4 8z", "M1303 1075l7 8-9 4z",
    "M1330 883L1342 890 1334 900z", "M1334 905L1340 935 1325 940 1308 945 1325 930z",
    "M1255 1220L1285 1210 1300 1190 1325 1182 1342 1178 1345 1195 1365 1208 1372 1178 1382 1215 1400 1245 1395 1280 1380 1305 1365 1317 1345 1312 1335 1280 1310 1272 1285 1275 1252 1288 1250 1270 1258 1250z", "M1348 1332h10l-6 12z", "M1466 1308L1476 1328 1464 1337z", "M1462 1335L1455 1347 1430 1371 1418 1370 1440 1352z",
    "M832 815L832 790 850 765 870 738 895 727 912 735 903 740 885 742 865 765 858 795 848 812z", "M860 800L865 770 885 745 890 757 880 785 878 815 868 830 860 820z", "M890 752L902 742 906 762 911 785 900 800 888 795 885 780 892 765z",
    "M795 820L802 830 812 855 805 868 790 865 798 850z", "M780 848L789 845 788 858 780 860z", "M803 876L825 865 838 878 835 905 820 908 810 905z", "M782 910L812 912 808 930 795 942 780 938z",
    "M862 845L892 848 895 868 875 872 862 862z", "M838 890L855 892 870 915 880 922 868 930 858 912 842 905z", "M860 880L885 882 890 895 875 908 865 895z", "M890 885L912 885 910 905 892 902z", "M880 918L895 913 897 938 886 932z",
    "M910 972L935 975 940 990 947 1015 910 1015z",
  ] },
  { fill: "#174ea6", paths: ["M840 850L858 846 861 878 842 882z"] },
];

function CountryCard() {
  return (
    <div className={`${card} -ml-px flex w-[1128px] flex-col rounded-t-[14px] border border-b-0 pl-[39px] pr-[38px]`}>
      <div className="flex h-[102px] justify-between pt-[38px] text-[#3c4043]">
        <div className={`${display} flex h-[32px] text-[21.500px] leading-[30px]`}>
          <Fit className="w-[129px] font-[450] text-[#202124]">Active users</Fit><Tri className="mt-[12px]" /><Fit className="ml-[5px] w-[26px]">by</Fit>
          <div className="ml-[7px] h-[31px] border-b-2 border-dashed border-[#80868b]"><Fit className="w-[88px]">Country</Fit></div>
        </div>
        <StatusPill />
      </div>
      <div className="flex justify-between">
        <svg viewBox="220 590 1260 820" preserveAspectRatio="none" className="ml-[50px] mt-[65px] h-[324px] w-[563px]">
          {mapShades.map((s) => <g key={s.fill} fill={s.fill} stroke="#fff" strokeWidth="2">{s.paths.map((d) => <path key={d} d={d} />)}</g>)}
        </svg>
        <div className="w-[419px]">
          <div className="flex h-[49px] items-start justify-between border-b border-[#dadce0] pt-[9px]">
            <ColumnHead width="w-[97px]">COUNTRY</ColumnHead>
            <ColumnHead width="w-[148px]">ACTIVE USERS</ColumnHead>
          </div>
          <TableRows rowClass="h-[51px]" rows={[
            { label: "Germany", value: "99K", bar: 360 }, { label: "Austria", value: "7.6K", bar: 28 }, { label: "Switzerland", value: "3.6K", bar: 13 },
            { label: "United States", value: "553", bar: 2 }, { label: "Indonesia", value: "469", bar: 2 }, { label: "Italy", value: "426", bar: 1 }, { label: "Luxembourg", value: "383", bar: 1 },
          ]} />
        </div>
      </div>
    </div>
  );
}

function Main() {
  return (
    <div className="flex min-w-0 flex-1 flex-col">
      <FilterBar />
      <TitleBar />
      <div className="flex h-[643px] shrink-0 gap-[24px]"><RevenueCard /><RealtimeCard /><InsightsCard /></div>
      <div className="flex h-[88px] shrink-0 items-center pl-px pt-[38px] text-[19.500px] font-medium text-[#3c4043]">
        <Fit className="w-[427px]">WHERE DO YOUR NEW USERS COME FROM?</Fit><Fit className="ml-[470px] w-[348px]">WHAT ARE YOUR TOP CAMPAIGNS?</Fit>
      </div>
      <div className="flex h-[543px] shrink-0 gap-[24px]"><NewUsersCard /><CampaignsCard /><CountryCard /></div>
    </div>
  );
}

/* ---------- Dock ---------- */

const tile = "flex size-[64px] items-center justify-center overflow-hidden rounded-[15px]";

function DockItem({ children, open = false, badge }: { children: ReactNode; open?: boolean; badge?: string }) {
  return (
    <div className="relative flex w-[82px] shrink-0 flex-col items-center pt-[14px]">
      {children}
      <div className={`mt-[9px] size-[8px] rounded-full ${open ? "bg-[#93b894]" : "bg-transparent"}`} />
      {badge && <div className="absolute right-[1px] top-[8px] flex size-[28px] items-center justify-center rounded-full bg-[#f4433c] text-[18px] text-white">{badge}</div>}
    </div>
  );
}

const ChromeIcon = ({ className }: { className: string }) => (
  <svg viewBox="0 0 48 48" className={className}>
    <path d="M24 24L3.200 12A24 24 0 0 1 44.800 12z" fill="#ea4335" /><path d="M24 24l20.800-12A24 24 0 0 1 24 48z" fill="#fbbc04" /><path d="M24 24v24A24 24 0 0 1 3.200 12z" fill="#34a853" />
    <path d="M24 13h21.200A24 24 0 0 1 24 48l9.500-18.500z" fill="#fbbc04" /><circle cx="24" cy="24" r="11" fill="#fff" /><circle cx="24" cy="24" r="8.500" fill="#4285f4" />
  </svg>
);

const launchColors = ["bg-[#3ecf4a]", "bg-[#f5b81c]", "bg-[#f78a1d]", "bg-[#e8332a]", "bg-[#a9adb3]", "bg-[#f5406b]", "bg-[#a03bd6]", "bg-[#2a8cf0]", "bg-[#37c8a8]"];

function Dock() {
  return (
    <div className="z-10 mx-auto mt-[2px] flex h-[99px] w-[3081px] shrink-0 rounded-[34px] border-2 border-[#46694a] bg-linear-to-r from-[#173318] via-[#1a421c] to-[#1d5220] pl-[2px] shadow-[0_0_64px_rgba(0,0,0,0.28)]">
      <DockItem open><div className={tile}><svg viewBox="0 0 64 64"><path d="M0 0h64v64H0z" fill="#2aa6f7" /><path d="M38 0h26v64H40c-2-8-2-16-2-24h-9C29 24 33 10 38 0z" fill="#e9eef4" /><path d="M15 20v6M48 20v6M12 44c12 10 28 10 40 0M38 0c-5 10-9 24-9 40h9c0 8 0 16 2 24" fill="none" stroke="#1b3247" strokeWidth="2.500" strokeLinecap="round" /></svg></div></DockItem>
      <DockItem><div className={`${tile} bg-[#b5b8b2]`}><div className="grid grid-cols-3 gap-[4px]">{launchColors.map((c) => <div key={c} className={`size-[12px] rounded-[3px] ${c}`} />)}</div></div></DockItem>
      <DockItem><div className={`${tile} bg-linear-to-b from-[#5bf675] to-[#0cbd2a]`}><svg viewBox="0 0 48 44" className="w-[46px] fill-white"><ellipse cx="24" cy="20" rx="22" ry="19" /><path d="M10 30c0 6-2 9-5 12 6 0 10-2 13-6z" /></svg></div></DockItem>
      <DockItem><div className={`${tile} bg-linear-to-b from-[#1d6cf0] to-[#1fc8fb]`}><svg viewBox="0 0 46 30" className="w-[46px]"><rect width="46" height="30" rx="4" fill="#f1f3f5" /><path d="M2 2l21 17L44 2M2 28l15-14M44 28L29 14" fill="none" stroke="#8d9aa6" strokeWidth="2" /></svg></div></DockItem>
      <DockItem><FaSkype className="size-[64px] text-[#0ba5e8]" /></DockItem>
      <DockItem><div className={`${tile} bg-[#00005b] text-[31px] font-bold text-[#9999ff]`}>Pr</div></DockItem>
      <DockItem open badge="7"><div className={`${tile} bg-linear-to-b from-[#5df877] to-[#12c333]`}><FaWhatsapp className="size-[54px] text-white" /></div></DockItem>
      <DockItem open badge="2"><div className={`${tile} bg-white`}><FaWhatsapp className="size-[50px] text-[#2bb741]" /></div></DockItem>
      <DockItem open><div className={`${tile} bg-[#e9ebec]`}><svg viewBox="0 0 56 56" className="size-[56px]"><circle cx="28" cy="28" r="27" fill="#1e86ee" /><circle cx="28" cy="28" r="23" fill="none" stroke="#bfe0ff" strokeWidth="3" strokeDasharray="1 2.600" /><path d="M46 10L31 31l-6-6z" fill="#f03e34" /><path d="M10 46l15-21 6 6z" fill="#f5f7f8" /></svg></div></DockItem>
      <DockItem open><div className={`${tile} bg-white`}><ChromeIcon className="size-[54px]" /></div></DockItem>
      <DockItem open>
        <div className="relative">
          <div className={`${tile} border-2 border-white bg-[linear-gradient(#9db6e6_0_50%,#cdd8ea_58%,#303d63_62%_80%,#5d6a8c_100%)]`} />
          <svg viewBox="0 0 36 36" className="absolute -bottom-[3px] -right-[4px] h-[35px] w-[35px]"><path d="M7 12L3 33q0 2 3 2h24q3 0 3-2l-4-21z" fill="#b9c1c9" stroke="#7c848d" /><rect x="7" y="1" width="22" height="11" rx="3" fill="#141414" /><ellipse cx="18" cy="25" rx="8" ry="6" fill="#e4e8ec" /></svg>
        </div>
      </DockItem>
      <DockItem><div className={`${tile} bg-[#0b5cff]`}><Fit className="w-[46px] text-[20px] font-bold text-white">zoom</Fit></div></DockItem>
      <DockItem><div className={`${tile} flex-col justify-start bg-[#efefec]`}><div className="h-[17px] w-full bg-[#fbc92c]" /><div className="mt-[14px] h-px w-full bg-[#cfcfcb]" /><div className="mt-[14px] h-px w-full bg-[#cfcfcb]" /></div></DockItem>
      <DockItem><div className={`${tile} bg-white`}><svg viewBox="0 0 50 46" className="w-[48px] fill-[#f5686c]"><circle cx="25" cy="10" r="10" /><circle cx="11" cy="34" r="10" /><circle cx="39" cy="34" r="10" /></svg></div></DockItem>
      <DockItem>
        <div className={`${tile} bg-white`}>
          <svg viewBox="0 0 48 48" className="size-[46px]">
            <g fill="#36c5f0"><path d="M22 5a4.500 4.500 0 1 0-4.500 4.500H22z" /><rect x="1" y="13" width="21" height="9" rx="4.500" /></g>
            <g fill="#2eb67d"><path d="M43 22a4.500 4.500 0 1 0-4.500-4.500V22z" /><rect x="26" y="1" width="9" height="21" rx="4.500" /></g>
            <g fill="#ecb22e"><path d="M26 43a4.500 4.500 0 1 0 4.500-4.500H26z" /><rect x="26" y="26" width="21" height="9" rx="4.500" /></g>
            <g fill="#e01e5a"><path d="M5 26a4.500 4.500 0 1 0 4.500 4.500V26z" /><rect x="13" y="26" width="9" height="21" rx="4.500" /></g>
          </svg>
        </div>
      </DockItem>
      <DockItem><div className={`${tile} bg-linear-to-b from-[#eac8c0] to-[#a68a86]`}><svg viewBox="0 0 52 52" className="size-[52px]"><path d="M22 5h6l18 32-9 3-13-22-11 17-6-3z" fill="#3b3a3a" /><path d="M27 22l14 15-24 12z" fill="#ef5169" /></svg></div></DockItem>
      <DockItem open><div className={`${tile} bg-[#25272b]`}><svg viewBox="0 0 56 56" className="size-[56px]"><circle cx="28" cy="27" r="20" fill="#2fa8ee" stroke="#c9cdd2" strokeWidth="8" /><path d="M34 30l15 20" stroke="#aeb3b9" strokeWidth="9" /></svg></div></DockItem>
      <DockItem badge="2"><div className={`${tile} bg-white`}><svg viewBox="0 0 56 48" className="w-[54px]"><circle cx="8" cy="7" r="5.500" fill="#1c7df0" /><circle cx="8" cy="24" r="5.500" fill="#f04438" /><circle cx="8" cy="41" r="5.500" fill="#f59b1c" /><path d="M19 7h32M19 24h32M19 41h32" stroke="#b9bcc0" strokeWidth="2" /></svg></div></DockItem>
      <DockItem open><div className={`${tile} bg-white`}><svg viewBox="0 0 48 48" className="size-[50px]"><path d="M35 1v46L9 21l-5-4 4-4 27 22V13L8 35l-4-4 31-30z" fill="#0078cc" /><path d="M35 1l11 5v36l-11 5z" fill="#2ba3f1" /></svg></div></DockItem>
      <DockItem><div className={`${tile} items-start justify-start border-2 border-[#d0d2d4] bg-[#1d1f22] pl-[7px] pt-[8px] font-['Liberation_Mono',monospace] text-[18px] font-bold text-white`}>&gt;_</div></DockItem>
      <DockItem open><div className={`${tile} bg-linear-to-b from-[#f04fa0] to-[#f5a640]`}><div className="flex size-[58px] rounded-[12px] bg-black pl-[10px] pt-[12px]"><svg viewBox="0 0 26 20" className="h-[20px] w-[26px]"><path d="M8 0L0 10h5l-2 8 9-10H7z" fill="#fff" /><path d="M13 17h12" stroke="#fff" strokeWidth="3" /></svg></div></div></DockItem>
      <DockItem><div className={`${tile} bg-white`}><svg viewBox="0 0 50 44" className="w-[48px]"><rect x="14" y="1" width="34" height="42" rx="3" fill="#21a366" /><path d="M31 1h17v14H31zM14 15h17v14H14z" fill="#33c481" /><path d="M14 29h34v12H14z" fill="#107c41" /><rect x="1" y="10" width="25" height="24" rx="2" fill="#107c41" /><path d="M8 16l11 12M19 16L8 28" stroke="#fff" strokeWidth="3" /></svg></div></DockItem>
      <DockItem><div className={`${tile} bg-[#4a4a4c]`}><svg viewBox="0 0 36 50" className="h-[48px]"><path d="M1 14L35 1v13L1 27z" fill="#ff9800" /><path d="M1 14v13l34 11V26z" fill="#f08400" /><path d="M35 26v12L1 50V38z" fill="#ff9800" /></svg></div></DockItem>
      <DockItem><div className={`${tile} bg-linear-to-b from-[#dfe1e6] to-[#8e9196]`}><svg viewBox="0 0 54 54" className="size-[56px] fill-none stroke-[#3b3d40]"><circle cx="27" cy="27" r="22" strokeWidth="4" strokeDasharray="2.500 1.500" /><circle cx="27" cy="27" r="16" strokeWidth="4" /><circle cx="27" cy="27" r="5" strokeWidth="3" /><path d="M31 27h12M25 23l-7-10M25 31l-7 10" strokeWidth="3" /></svg></div></DockItem>
      <DockItem><div className="flex size-[64px] items-center justify-center rounded-full bg-[#14a800]"><Fit className="w-[48px] text-[36px] font-bold leading-[50px] text-white">up</Fit></div></DockItem>
      <DockItem><div className={`${tile} bg-linear-to-b from-[#fb5c74] to-[#fa233b]`}><svg viewBox="0 0 36 42" className="h-[42px] fill-white"><path d="M11 7l23-6v30a6 5 0 1 1-4-5V12l-15 4v20a6 5 0 1 1-4-5z" /></svg></div></DockItem>
      <DockItem><div className={`${tile} flex-col border-2 border-[#a7a9ab] bg-[#1b1c1e]`}><div className="size-[42px] rounded-full border-2 border-white bg-[conic-gradient(#eee,#777,#eee,#888,#fff,#777,#eee)]" /><div className="mt-[3px] h-[4px] w-[18px] bg-white" /></div></DockItem>
      <DockItem><div className={`${tile} bg-linear-to-b from-[#00c4cc] via-[#2f86e0] to-[#7d2ae8] font-['Liberation_Serif',serif] text-[21px] font-bold italic text-white`}>Canva</div></DockItem>
      <DockItem><div className={`${tile} bg-[#111638]`}><svg viewBox="0 0 54 54" className="size-[52px]"><circle cx="27" cy="27" r="24" fill="#262427" stroke="#e6e6e6" strokeWidth="3" /><path d="M27 27C16 24 14 14 21 7M27 27c8-8 18-5 20 4M27 27c3 11-4 19-13 17" fill="none" stroke="#d5d5d5" strokeWidth="3" /></svg></div></DockItem>
      <DockItem><div className="-my-[2px] flex size-[68px] items-center justify-center rounded-full bg-white"><svg viewBox="0 0 54 54" className="size-[54px] fill-none stroke-[#625df5]" strokeWidth="4"><circle cx="27" cy="27" r="8" /><path d="M27 0v20M27 34v20M0 27h20M34 27h20M8 8l14 14M32 32l14 14M46 8L32 22M8 46l14-14M16.500 2.500l8 18M29.500 33.500l8 18M37.500 2.500l-8 18M24.500 33.500l-8 18M2.500 16.500l18 8M33.500 29.500l18 8M51.500 16.500l-18 8M2.500 37.500l18-8" /></svg></div></DockItem>
      <DockItem><div className="relative"><div className={`${tile} bg-[repeating-linear-gradient(#fafafa_0_8px,#d9dadc_8px_9px)]`} /><svg viewBox="0 0 40 72" className="absolute -top-[7px] left-[22px] h-[74px] w-[40px]"><path d="M34 2L4 70" stroke="#70788a" strokeWidth="6" /><path d="M34 2L4 70" stroke="#dfe4ea" strokeWidth="2" /></svg></div></DockItem>
      <DockItem><div className={`${tile} bg-white`}><svg viewBox="0 0 52 52" className="size-[54px] fill-none stroke-[#1c8ff5]" strokeWidth="9"><path d="M22 43A18 18 0 0 1 20 9M30 9a18 18 0 0 1 2 34" /><path d="M12 51l3-14 11 8zM40 1l-3 14-11-8z" className="fill-[#1c8ff5] stroke-none" /></svg></div></DockItem>
      <DockItem><div className={`${tile} bg-linear-to-b from-[#1fb4f8] to-[#1b68ee]`}><svg viewBox="0 0 48 44" className="w-[48px] fill-none stroke-white" strokeWidth="5" strokeLinecap="round"><path d="M27 4L12 30M21 4l19 34M4 29h24M35 29h9M8 37l-2 4" /></svg></div></DockItem>
      <DockItem><div className="my-[5px] flex h-[54px] w-[76px] items-center justify-center rounded-[14px] bg-[#f00]"><svg viewBox="0 0 20 24" className="h-[24px] w-[20px] fill-white"><path d="M0 0l20 12L0 24z" /></svg></div></DockItem>
      <DockItem><div className={`${tile} bg-white`}><svg viewBox="0 0 48 34" className="w-[50px] fill-none stroke-black" strokeWidth="6"><path d="M46 4L34 11V3H6v8l40 19M46 30l-12-7v8H6v-8L46 4" /></svg></div></DockItem>
      <div className="ml-[18px] mt-[12px] h-[74px] w-[2px] bg-[#5f8a62]" />
      <div className="relative ml-[24px] w-[70px] pt-[40px]">
        <div className="flex h-[8px] w-full justify-end bg-[#191b20]"><div className="h-full w-[18px] bg-[#9ab6ee]" /></div>
        <div className="absolute right-[2px] top-[56px] flex size-[24px] items-center justify-center rounded-[5px] bg-white"><ChromeIcon className="size-[20px]" /></div>
      </div>
      <svg viewBox="0 0 58 70" className="ml-[18px] mt-[11px] h-[70px] w-[58px]"><path d="M2 5l6 58c2 8 40 8 42 0l6-58z" fill="#71787a" /><path d="M10 8l5 54M48 8l-5 54" stroke="#5a6163" strokeWidth="3" /><ellipse cx="29" cy="6" rx="27" ry="5" fill="#4e5456" stroke="#8b9294" strokeWidth="2" /></svg>
    </div>
  );
}

export default function App() {
  return (
    <div className="flex h-[2100px] w-[3360px] flex-col overflow-hidden bg-[linear-gradient(90deg,#0b2a0e_0%,#1f6a23_25%,#237a27_60%,#49a74b_100%)] font-['Roboto',sans-serif]">
      <MenuBar />
      <div className="flex h-[1940px] shrink-0 bg-[linear-gradient(#2d57b3_0_50%,#000_50%)]">
        <div className="flex flex-1 flex-col overflow-hidden rounded-[22px] border-t-2 border-black bg-[#f8fafc] shadow-[0_0_30px_rgba(0,0,0,0.7)]">
          <TabStrip />
          <Toolbar />
          <Bookmarks />
          <Banner />
          <Header />
          <div className="relative flex min-h-0 flex-1">
            <Rail />
            <Nav />
            <Main />
            <div className="absolute right-0 top-0 h-[712px] w-[10px] rounded-full bg-[#dadcdd]" />
            <div className="absolute right-[96px] top-[1330px] flex size-[90px] items-center justify-center rounded-full bg-[#1a73e8] shadow-lg">
              <svg viewBox="0 0 50 50" className="size-[52px]">
                <path d="M15 12h8l1.500 5 3.500 2 5-1 4 7-3.500 4v4l3.500 4-4 7-5-1-3.500 2-1.500 5h-8l-1.500-5L10 43l-5 1-4-7 3.500-4v-4L1 25l4-7 5 1 3.500-2z" fill="none" stroke="#fff" strokeWidth="3" strokeLinejoin="round" />
                <circle cx="19" cy="31" r="7" fill="#fff" />
                <path d="M39 1l2.500 6 6 2.500-6 2.500-2.500 6-2.500-6-6-2.500 6-2.500zM44 23l1.800 4.200L50 29l-4.200 1.800L44 35l-1.800-4.200L38 29l4.200-1.800z" fill="#fff" />
              </svg>
            </div>
          </div>
        </div>
      </div>
      <Dock />
    </div>
  );
}
